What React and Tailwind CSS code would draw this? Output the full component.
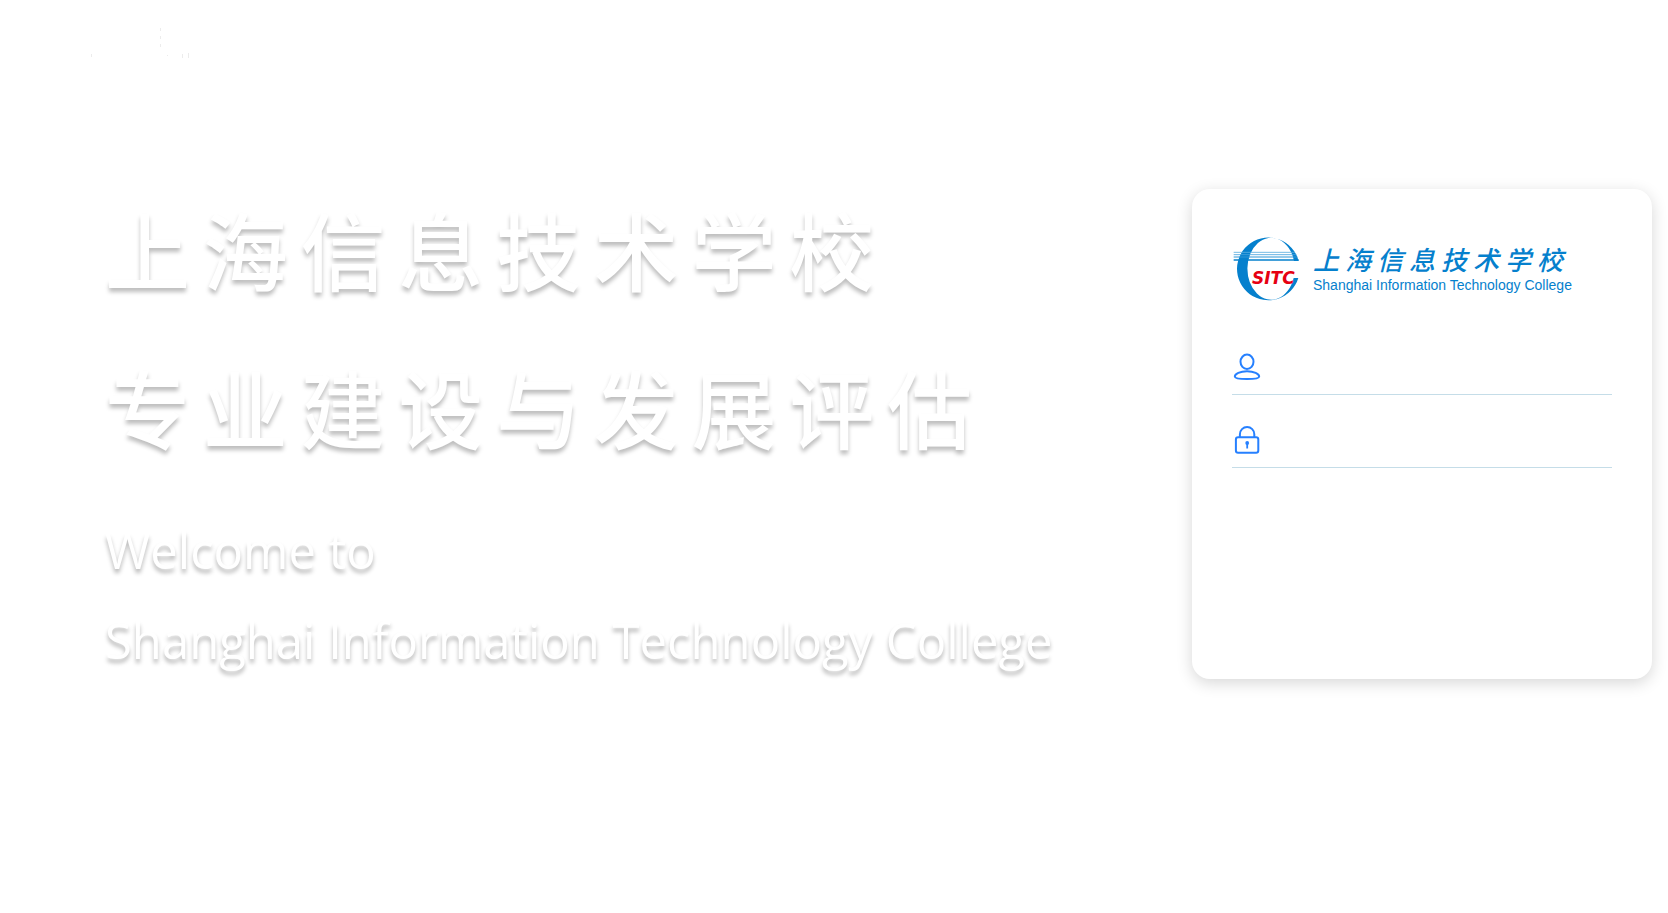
function HeaderMark() {
  return (
    <svg viewBox="0 0 100 32" className="h-8 w-[100px]" fill="#ececec" aria-hidden="true">
      <rect x="70" y="2" width="1" height="3" />
      <rect x="70" y="10" width="1" height="3" />
      <rect x="70" y="18" width="1" height="3" />
      <rect x="1" y="28" width="1" height="3" />
      <rect x="77" y="29" width="1" height="1" />
      <rect x="92" y="28" width="1" height="4" />
      <rect x="98" y="27" width="1" height="5" />
    </svg>
  );
}

function Emblem() {
  return (
    <svg viewBox="160 168 198 195" className="h-[65px] w-[66px] shrink-0" role="img" aria-label="SITC">
      <path
        d="M357 243 A94 94 0 1 0 356 294 L342 294 A71 93 0 1 1 343 243 Z"
        fill="#0580cd"
      />
      <path d="M162 217H346" stroke="#5aaee0" strokeWidth="2.5" />
      <path d="M162 224H350" stroke="#48a4dc" strokeWidth="2.5" />
      <path d="M162 231H353" stroke="#2f97d6" strokeWidth="3" />
      <path d="M162 240H357" stroke="#0580cd" strokeWidth="5" />
      <text
        x="217"
        y="311"
        fontFamily="DejaVu Sans, sans-serif"
        fontSize="51"
        fontWeight="700"
        fontStyle="italic"
        fill="#e60012"
      >
        SITC
      </text>
    </svg>
  );
}

function UserIcon() {
  return (
    <svg viewBox="0 0 28 28" className="size-7" fill="none" stroke="#2680ff" strokeWidth="2" aria-hidden="true">
      <ellipse cx="14" cy="8.8" rx="6.5" ry="7.2" />
      <path d="M14 18.2c-6.900 0-12.200 2.600-12.200 5.400 0 2 4.200 2.500 12.200 2.500s12.200-.5 12.200-2.500c0-2.800-5.300-5.400-12.200-5.400z" />
    </svg>
  );
}

function LockIcon() {
  return (
    <svg viewBox="0 0 28 28" className="size-7" fill="none" stroke="#2680ff" strokeWidth="2" aria-hidden="true">
      <rect x="2.900" y="11.200" width="22.400" height="15.600" rx="2.200" />
      <path d="M6.900 11V8.200a7.200 7.200 0 0 1 14.400 0V11" />
      <circle cx="14.200" cy="17" r="1.900" fill="#2680ff" stroke="none" />
      <path d="M14.200 17v5.500" strokeWidth="1.800" />
    </svg>
  );
}

function Field({ id, label, type, autoComplete, icon }) {
  return (
    <div className="flex h-[52px] items-center gap-3 border-b border-[#c5dde8] pb-1 pl-px">
      <label htmlFor={id} aria-label={label} className="shrink-0">
        {icon}
      </label>
      <input
        id={id}
        type={type}
        autoComplete={autoComplete}
        className="min-w-0 flex-1 bg-transparent text-base text-gray-800 outline-none"
      />
    </div>
  );
}

export default function App() {
  return (
    <div className="flex min-h-screen flex-col bg-white font-['Open_Sans','Noto_Sans_CJK_SC',sans-serif]">
      <header className="px-[90px] pt-[26px]">
        <HeaderMark />
      </header>
      <main className="flex items-start justify-between pt-[111px] pr-4 pl-[105px]">
        <section className="text-white">
          <h1 className="font-['Noto_Sans_CJK_SC',sans-serif] text-[85px] leading-[158px] font-medium tracking-[0.15em] whitespace-nowrap [text-shadow:0_4px_4px_rgba(0,0,0,0.26)]">
            上海信息技术学校
            <br />
            专业建设与发展评估
          </h1>
          <p className="mt-5 text-[49px] leading-[90px] whitespace-nowrap [text-shadow:0_4px_4px_rgba(0,0,0,0.28)]">
            Welcome to
            <br />
            Shanghai Information Technology College
          </p>
        </section>
        <form
          className="mt-5 min-h-[490px] w-[460px] shrink-0 rounded-[18px] bg-white px-10 pt-[47px] shadow-[0_4px_16px_rgba(0,0,0,0.16)]"
          onSubmit={(e) => e.preventDefault()}
        >
          <div className="flex items-center gap-[14px] pl-px text-[#0580cd]">
            <Emblem />
            <div className="whitespace-nowrap">
              <p className="font-['Noto_Sans_CJK_SC',sans-serif] text-[26px] leading-8 font-medium tracking-[6px] italic">
                上海信息技术学校
              </p>
              <p className="font-['Liberation_Sans',sans-serif] text-[14px] leading-5">
                Shanghai Information Technology College
              </p>
            </div>
          </div>
          <div className="mt-[42px] flex flex-col gap-[21px]">
            <Field id="account" label="账号" type="text" autoComplete="username" icon={<UserIcon />} />
            <Field id="password" label="密码" type="password" autoComplete="current-password" icon={<LockIcon />} />
          </div>
        </form>
      </main>
    </div>
  );
}
